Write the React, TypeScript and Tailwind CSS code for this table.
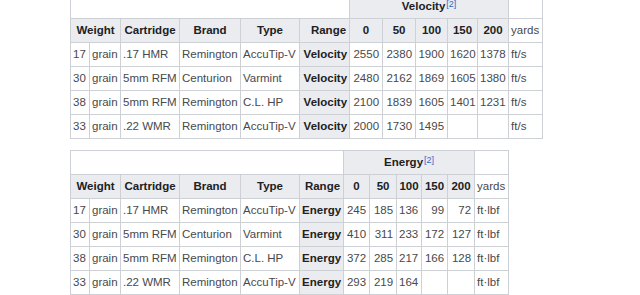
const velocityRows = [
  ["17", "grain", ".17 HMR", "Remington", "AccuTip-V", "2550", "2380", "1900", "1620", "1378"],
  ["30", "grain", "5mm RFM", "Centurion", "Varmint", "2480", "2162", "1869", "1605", "1380"],
  ["38", "grain", "5mm RFM", "Remington", "C.L. HP", "2100", "1839", "1605", "1401", "1231"],
  ["33", "grain", ".22 WMR", "Remington", "AccuTip-V", "2000", "1730", "1495", "", ""],
];

const energyRows = [
  ["17", "grain", ".17 HMR", "Remington", "AccuTip-V", "245", "185", "136", "99", "72"],
  ["30", "grain", "5mm RFM", "Centurion", "Varmint", "410", "311", "233", "172", "127"],
  ["38", "grain", "5mm RFM", "Remington", "C.L. HP", "372", "285", "217", "166", "128"],
  ["33", "grain", ".22 WMR", "Remington", "AccuTip-V", "293", "219", "164", "", ""],
];

const td = "border border-[#cdd0d5] px-[2px] text-[#48494c] whitespace-nowrap overflow-hidden";
const th = "border border-[#cdd0d5] bg-[#eaecf0] font-bold text-[#202122] whitespace-nowrap overflow-hidden";

type TableProps = {
  title: string;
  label: string;
  unit: string;
  widths: number[];
  rows: string[][];
};

const DataTable = ({ title, label, unit, widths, rows }: TableProps) => {
  const total = widths.reduce((a, b) => a + b, 0);
  return (
    <table
      className="table-fixed border-collapse text-[11.5px] leading-none"
      style={{ width: total }}
    >
      <colgroup>
        {widths.map((w, i) => (
          <col key={i} style={{ width: w }} />
        ))}
      </colgroup>
      <tbody>
        <tr className="h-[24px]">
          <td colSpan={6} className="border border-[#cdd0d5] bg-white"></td>
          <th colSpan={5} className={th + " text-center"}>
            {title}
            <sup className="text-[#3366cc] font-normal text-[9px] ml-[1px] relative -top-[3px]">[2]</sup>
          </th>
          <td className="border border-[#cdd0d5] bg-white"></td>
        </tr>
        <tr className="h-[24px]">
          <th colSpan={2} className={th + " text-center"}>Weight</th>
          <th className={th + " text-center"}>Cartridge</th>
          <th className={th + " text-center"}>Brand</th>
          <th className={th + " text-center"}>Type</th>
          <th className={th + " text-right pr-[3px]"}>Range</th>
          <th className={th + " text-center"}>0</th>
          <th className={th + " text-center"}>50</th>
          <th className={th + " text-center"}>100</th>
          <th className={th + " text-center"}>150</th>
          <th className={th + " text-center"}>200</th>
          <td className={td + " text-left"}>yards</td>
        </tr>
        {rows.map((r, i) => (
          <tr key={i} className="h-[24px]">
            <td className={td}>{r[0]}</td>
            <td className={td}>{r[1]}</td>
            <td className={td}>{r[2]}</td>
            <td className={td}>{r[3]}</td>
            <td className={td}>{r[4]}</td>
            <th className={th + " text-right pr-[2px]"}>{label}</th>
            {r.slice(5).map((v, j) => (
              <td key={j} className={td + " text-right pr-[3px]"}>
                {v}
              </td>
            ))}
            <td className={td}>{unit}</td>
          </tr>
        ))}
      </tbody>
    </table>
  );
};

export default function App() {
  return (
    <div
      className="w-[640px] h-[295px] bg-white overflow-hidden"
      style={{ fontFamily: '"Liberation Sans", Arial, sans-serif' }}
    >
      <div className="flex flex-col gap-[11px] pl-[70px] -mt-[6px]">
        <DataTable
          title="Velocity"
          label="Velocity"
          unit="ft/s"
          widths={[19, 31, 59, 61, 59, 50, 33, 33, 32, 30, 31, 34]}
          rows={velocityRows}
        />
        <DataTable
          title="Energy"
          label="Energy"
          unit="ft·lbf"
          widths={[19, 31, 59, 61, 59, 44, 26, 27, 25, 26, 27, 34]}
          rows={energyRows}
        />
      </div>
    </div>
  );
}
